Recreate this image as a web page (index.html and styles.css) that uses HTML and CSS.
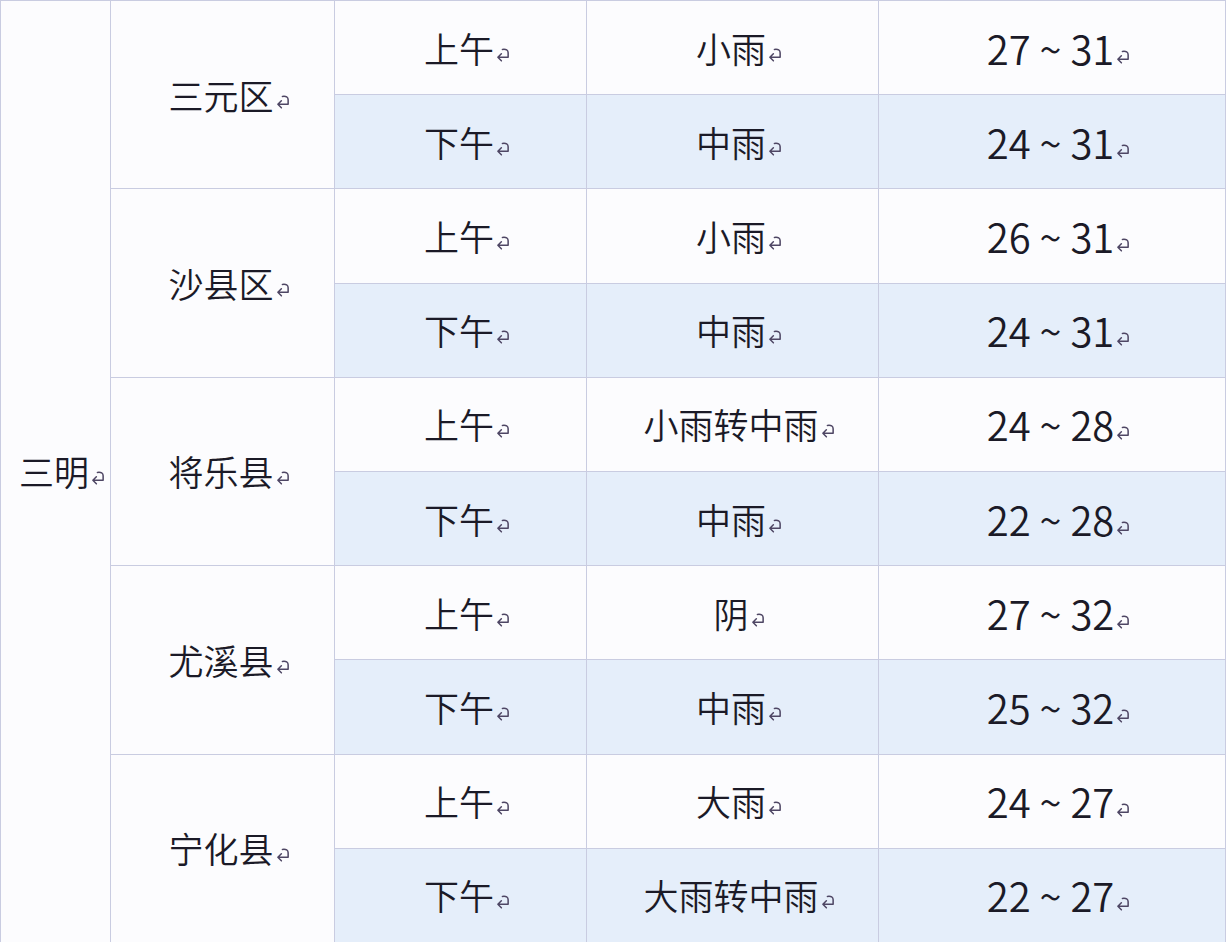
FILE: index.html
```html
<!DOCTYPE html>
<html lang="zh-CN">
<head>
<meta charset="utf-8">
<title>三明天气预报</title>
<link rel="stylesheet" href="styles.css">
</head>
<body>
<table class="forecast">
  <colgroup>
    <col class="c-city">
    <col class="c-county">
    <col class="c-time">
    <col class="c-weather">
    <col class="c-temp">
  </colgroup>
  <tbody>
    <tr class="am">
      <td class="city" rowspan="10">三明<svg class="pm-mark" viewBox="0 0 12 12"><path d="M5.5 1.2 Q10.4 0.6 10.4 4 V8 H1.6 M4.6 5 L1.6 8 L4.6 11"/></svg></td>
      <td class="county" rowspan="2">三元区<svg class="pm-mark" viewBox="0 0 12 12"><path d="M5.5 1.2 Q10.4 0.6 10.4 4 V8 H1.6 M4.6 5 L1.6 8 L4.6 11"/></svg></td>
      <td>上午<svg class="pm-mark" viewBox="0 0 12 12"><path d="M5.5 1.2 Q10.4 0.6 10.4 4 V8 H1.6 M4.6 5 L1.6 8 L4.6 11"/></svg></td>
      <td>小雨<svg class="pm-mark" viewBox="0 0 12 12"><path d="M5.5 1.2 Q10.4 0.6 10.4 4 V8 H1.6 M4.6 5 L1.6 8 L4.6 11"/></svg></td>
      <td class="temp">27 ~ 31<svg class="pm-mark" viewBox="0 0 12 12"><path d="M5.5 1.2 Q10.4 0.6 10.4 4 V8 H1.6 M4.6 5 L1.6 8 L4.6 11"/></svg></td>
    </tr>
    <tr class="pmrow">
      <td>下午<svg class="pm-mark" viewBox="0 0 12 12"><path d="M5.5 1.2 Q10.4 0.6 10.4 4 V8 H1.6 M4.6 5 L1.6 8 L4.6 11"/></svg></td>
      <td>中雨<svg class="pm-mark" viewBox="0 0 12 12"><path d="M5.5 1.2 Q10.4 0.6 10.4 4 V8 H1.6 M4.6 5 L1.6 8 L4.6 11"/></svg></td>
      <td class="temp">24 ~ 31<svg class="pm-mark" viewBox="0 0 12 12"><path d="M5.5 1.2 Q10.4 0.6 10.4 4 V8 H1.6 M4.6 5 L1.6 8 L4.6 11"/></svg></td>
    </tr>
    <tr class="am">
      <td class="county" rowspan="2">沙县区<svg class="pm-mark" viewBox="0 0 12 12"><path d="M5.5 1.2 Q10.4 0.6 10.4 4 V8 H1.6 M4.6 5 L1.6 8 L4.6 11"/></svg></td>
      <td>上午<svg class="pm-mark" viewBox="0 0 12 12"><path d="M5.5 1.2 Q10.4 0.6 10.4 4 V8 H1.6 M4.6 5 L1.6 8 L4.6 11"/></svg></td>
      <td>小雨<svg class="pm-mark" viewBox="0 0 12 12"><path d="M5.5 1.2 Q10.4 0.6 10.4 4 V8 H1.6 M4.6 5 L1.6 8 L4.6 11"/></svg></td>
      <td class="temp">26 ~ 31<svg class="pm-mark" viewBox="0 0 12 12"><path d="M5.5 1.2 Q10.4 0.6 10.4 4 V8 H1.6 M4.6 5 L1.6 8 L4.6 11"/></svg></td>
    </tr>
    <tr class="pmrow">
      <td>下午<svg class="pm-mark" viewBox="0 0 12 12"><path d="M5.5 1.2 Q10.4 0.6 10.4 4 V8 H1.6 M4.6 5 L1.6 8 L4.6 11"/></svg></td>
      <td>中雨<svg class="pm-mark" viewBox="0 0 12 12"><path d="M5.5 1.2 Q10.4 0.6 10.4 4 V8 H1.6 M4.6 5 L1.6 8 L4.6 11"/></svg></td>
      <td class="temp">24 ~ 31<svg class="pm-mark" viewBox="0 0 12 12"><path d="M5.5 1.2 Q10.4 0.6 10.4 4 V8 H1.6 M4.6 5 L1.6 8 L4.6 11"/></svg></td>
    </tr>
    <tr class="am">
      <td class="county" rowspan="2">将乐县<svg class="pm-mark" viewBox="0 0 12 12"><path d="M5.5 1.2 Q10.4 0.6 10.4 4 V8 H1.6 M4.6 5 L1.6 8 L4.6 11"/></svg></td>
      <td>上午<svg class="pm-mark" viewBox="0 0 12 12"><path d="M5.5 1.2 Q10.4 0.6 10.4 4 V8 H1.6 M4.6 5 L1.6 8 L4.6 11"/></svg></td>
      <td>小雨转中雨<svg class="pm-mark" viewBox="0 0 12 12"><path d="M5.5 1.2 Q10.4 0.6 10.4 4 V8 H1.6 M4.6 5 L1.6 8 L4.6 11"/></svg></td>
      <td class="temp">24 ~ 28<svg class="pm-mark" viewBox="0 0 12 12"><path d="M5.5 1.2 Q10.4 0.6 10.4 4 V8 H1.6 M4.6 5 L1.6 8 L4.6 11"/></svg></td>
    </tr>
    <tr class="pmrow">
      <td>下午<svg class="pm-mark" viewBox="0 0 12 12"><path d="M5.5 1.2 Q10.4 0.6 10.4 4 V8 H1.6 M4.6 5 L1.6 8 L4.6 11"/></svg></td>
      <td>中雨<svg class="pm-mark" viewBox="0 0 12 12"><path d="M5.5 1.2 Q10.4 0.6 10.4 4 V8 H1.6 M4.6 5 L1.6 8 L4.6 11"/></svg></td>
      <td class="temp">22 ~ 28<svg class="pm-mark" viewBox="0 0 12 12"><path d="M5.5 1.2 Q10.4 0.6 10.4 4 V8 H1.6 M4.6 5 L1.6 8 L4.6 11"/></svg></td>
    </tr>
    <tr class="am">
      <td class="county" rowspan="2">尤溪县<svg class="pm-mark" viewBox="0 0 12 12"><path d="M5.5 1.2 Q10.4 0.6 10.4 4 V8 H1.6 M4.6 5 L1.6 8 L4.6 11"/></svg></td>
      <td>上午<svg class="pm-mark" viewBox="0 0 12 12"><path d="M5.5 1.2 Q10.4 0.6 10.4 4 V8 H1.6 M4.6 5 L1.6 8 L4.6 11"/></svg></td>
      <td>阴<svg class="pm-mark" viewBox="0 0 12 12"><path d="M5.5 1.2 Q10.4 0.6 10.4 4 V8 H1.6 M4.6 5 L1.6 8 L4.6 11"/></svg></td>
      <td class="temp">27 ~ 32<svg class="pm-mark" viewBox="0 0 12 12"><path d="M5.5 1.2 Q10.4 0.6 10.4 4 V8 H1.6 M4.6 5 L1.6 8 L4.6 11"/></svg></td>
    </tr>
    <tr class="pmrow">
      <td>下午<svg class="pm-mark" viewBox="0 0 12 12"><path d="M5.5 1.2 Q10.4 0.6 10.4 4 V8 H1.6 M4.6 5 L1.6 8 L4.6 11"/></svg></td>
      <td>中雨<svg class="pm-mark" viewBox="0 0 12 12"><path d="M5.5 1.2 Q10.4 0.6 10.4 4 V8 H1.6 M4.6 5 L1.6 8 L4.6 11"/></svg></td>
      <td class="temp">25 ~ 32<svg class="pm-mark" viewBox="0 0 12 12"><path d="M5.5 1.2 Q10.4 0.6 10.4 4 V8 H1.6 M4.6 5 L1.6 8 L4.6 11"/></svg></td>
    </tr>
    <tr class="am">
      <td class="county" rowspan="2">宁化县<svg class="pm-mark" viewBox="0 0 12 12"><path d="M5.5 1.2 Q10.4 0.6 10.4 4 V8 H1.6 M4.6 5 L1.6 8 L4.6 11"/></svg></td>
      <td>上午<svg class="pm-mark" viewBox="0 0 12 12"><path d="M5.5 1.2 Q10.4 0.6 10.4 4 V8 H1.6 M4.6 5 L1.6 8 L4.6 11"/></svg></td>
      <td>大雨<svg class="pm-mark" viewBox="0 0 12 12"><path d="M5.5 1.2 Q10.4 0.6 10.4 4 V8 H1.6 M4.6 5 L1.6 8 L4.6 11"/></svg></td>
      <td class="temp">24 ~ 27<svg class="pm-mark" viewBox="0 0 12 12"><path d="M5.5 1.2 Q10.4 0.6 10.4 4 V8 H1.6 M4.6 5 L1.6 8 L4.6 11"/></svg></td>
    </tr>
    <tr class="pmrow">
      <td>下午<svg class="pm-mark" viewBox="0 0 12 12"><path d="M5.5 1.2 Q10.4 0.6 10.4 4 V8 H1.6 M4.6 5 L1.6 8 L4.6 11"/></svg></td>
      <td>大雨转中雨<svg class="pm-mark" viewBox="0 0 12 12"><path d="M5.5 1.2 Q10.4 0.6 10.4 4 V8 H1.6 M4.6 5 L1.6 8 L4.6 11"/></svg></td>
      <td class="temp">22 ~ 27<svg class="pm-mark" viewBox="0 0 12 12"><path d="M5.5 1.2 Q10.4 0.6 10.4 4 V8 H1.6 M4.6 5 L1.6 8 L4.6 11"/></svg></td>
    </tr>
  </tbody>
</table>
</body>
</html>
```

FILE: styles.css
```css
html, body {
  margin: 0;
  padding: 0;
  background: #fcfcfe;
}

.forecast {
  border-collapse: collapse;
  table-layout: fixed;
  width: 1225px;
  font-family: "Noto Sans CJK SC", "Noto Sans", sans-serif;
  font-size: 35px;
  font-weight: 350;
  color: #1b1a27;
}

.c-city { width: 110px; }
.c-county { width: 224px; }
.c-time { width: 252px; }
.c-weather { width: 292px; }
.c-temp { width: 347px; }

.forecast tr {
  height: 94.2px;
}

.forecast td {
  border: 1px solid #c9cce1;
  padding: 0 0 0 13px;
  text-align: center;
  vertical-align: middle;
  white-space: nowrap;
  line-height: 1.2;
  background: #fcfcfe;
}

.forecast tr.pmrow td {
  background: #e5eefa;
}

.forecast td.city,
.forecast td.county {
  background: #fcfcfe;
}

.forecast td.temp {
  font-size: 40px;
  word-spacing: 0;
}

.pm-mark {
  width: 14px;
  height: 14px;
  margin-left: 2px;
  vertical-align: 1px;
  fill: none;
  stroke: #4e4664;
  stroke-width: 1.3;
  stroke-linecap: round;
  stroke-linejoin: round;
}
```
